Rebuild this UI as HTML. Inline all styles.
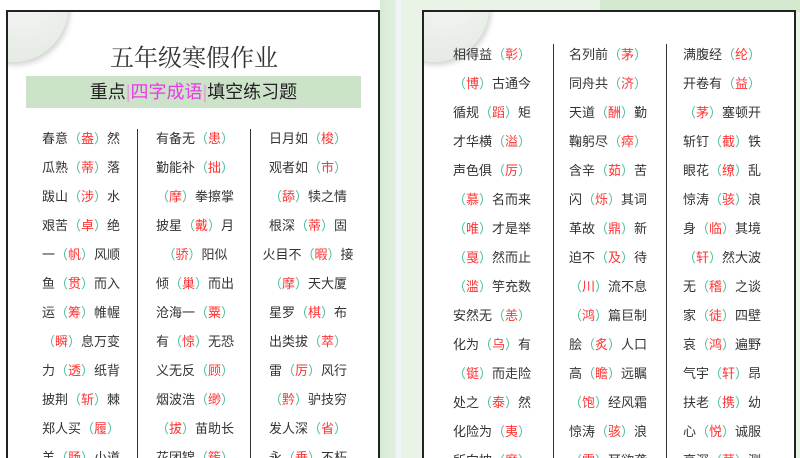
<!DOCTYPE html>
<html style="overflow:hidden;height:458px"><head><meta charset="utf-8"><style>
html,body{overflow:hidden}
body{margin:0;width:800px;height:458px;overflow:hidden;background:#e6f2e4;position:relative;font-family:"Liberation Sans","Noto Sans CJK SC",sans-serif}
.bg1{position:absolute;left:0;top:0;width:380px;height:458px;background:#fff}
.bg2{position:absolute;left:380px;top:0;width:16px;height:458px;background:linear-gradient(90deg,#d6ebd3,#e2f0df)}
.bg3{position:absolute;left:396px;top:0;width:5px;height:458px;background:#f2f4fa}
.bg4{position:absolute;left:401px;top:0;width:399px;height:458px;background:#e9f4e7}
.top{position:absolute;left:600px;top:0;width:200px;height:12px;background:#d4e9cf}
.page{position:absolute;top:10px;height:448px;background:#fff;border:2px solid #222;border-bottom:none;box-sizing:border-box;overflow:hidden}
.circ{position:absolute;border-radius:50%;background:radial-gradient(circle at 60% 40%,#f4f6f3,#e0e6df);box-shadow:2px 3px 6px rgba(0,0,0,.18)}
.title{position:absolute;left:0;width:372px;top:32px;text-align:center;font-size:24px;line-height:30px;color:#333;font-family:"Liberation Serif","Noto Serif CJK SC",serif}
.band{position:absolute;left:18px;top:64px;width:335px;height:32px;background:#cde3c9;text-align:center;font-size:18px;line-height:32px;color:#222}
.band i{font-style:normal;color:#e838e8}
.band b{font-weight:normal;color:#e0a0d0}
.col{position:absolute;text-align:center;font-size:13px;line-height:29px;color:#333;white-space:nowrap}
.col p{margin:0}
.col s{text-decoration:none;color:#4bbf9a}
.col u{text-decoration:none;color:#f33}
.vl{position:absolute;width:1px;background:#333;top:117px;height:340px}
</style></head><body>
<div class="bg1"></div><div class="bg2"></div><div class="bg3"></div><div class="bg4"></div><div class="top"></div>
<div class="page" style="left:6px;width:374px">
<div class="circ" style="left:-50px;top:-60px;width:110px;height:110px"></div>
<div class="title">五年级寒假作业</div>
<div class="band">重点<b>|</b><i>四字成语</i><b>|</b>填空练习题</div>
<div class="vl" style="left:129px"></div><div class="vl" style="left:242px"></div>
<div class="col" style="left:13px;width:120px;top:112px">
<p>春意<s>（</s><u>盎</u><s>）</s>然</p><p>瓜熟<s>（</s><u>蒂</u><s>）</s>落</p><p>跋山<s>（</s><u>涉</u><s>）</s>水</p><p>艰苦<s>（</s><u>卓</u><s>）</s>绝</p><p>一<s>（</s><u>帆</u><s>）</s>风顺</p><p>鱼<s>（</s><u>贯</u><s>）</s>而入</p><p>运<s>（</s><u>筹</u><s>）</s>帷幄</p><p><s>（</s><u>瞬</u><s>）</s>息万变</p><p>力<s>（</s><u>透</u><s>）</s>纸背</p><p>披荆<s>（</s><u>斩</u><s>）</s>棘</p><p>郑人买<s>（</s><u>履</u><s>）</s></p><p>羊<s>（</s><u>肠</u><s>）</s>小道</p></div>
<div class="col" style="left:127px;width:120px;top:112px">
<p>有备无<s>（</s><u>患</u><s>）</s></p><p>勤能补<s>（</s><u>拙</u><s>）</s></p><p><s>（</s><u>摩</u><s>）</s>拳擦掌</p><p>披星<s>（</s><u>戴</u><s>）</s>月</p><p><s>（</s><u>骄</u><s>）</s>阳似</p><p>倾<s>（</s><u>巢</u><s>）</s>而出</p><p>沧海一<s>（</s><u>粟</u><s>）</s></p><p>有<s>（</s><u>惊</u><s>）</s>无恐</p><p>义无反<s>（</s><u>顾</u><s>）</s></p><p>烟波浩<s>（</s><u>缈</u><s>）</s></p><p><s>（</s><u>拔</u><s>）</s>苗助长</p><p>花团锦<s>（</s><u>簇</u><s>）</s></p></div>
<div class="col" style="left:240px;width:120px;top:112px">
<p>日月如<s>（</s><u>梭</u><s>）</s></p><p>观者如<s>（</s><u>市</u><s>）</s></p><p><s>（</s><u>舔</u><s>）</s>犊之情</p><p>根深<s>（</s><u>蒂</u><s>）</s>固</p><p>火目不<s>（</s><u>暇</u><s>）</s>接</p><p><s>（</s><u>摩</u><s>）</s>天大厦</p><p>星罗<s>（</s><u>棋</u><s>）</s>布</p><p>出类拔<s>（</s><u>萃</u><s>）</s></p><p>雷<s>（</s><u>厉</u><s>）</s>风行</p><p><s>（</s><u>黔</u><s>）</s>驴技穷</p><p>发人深<s>（</s><u>省</u><s>）</s></p><p>永<s>（</s><u>垂</u><s>）</s>不朽</p></div>
</div>
<div class="page" style="left:422px;width:374px">
<div class="circ" style="left:-45px;top:-60px;width:110px;height:110px"></div>
<div class="vl" style="left:129px;top:32px;height:420px"></div><div class="vl" style="left:242px;top:32px;height:420px"></div>
<div class="col" style="left:8px;width:120px;top:28px">
<p>相得益<s>（</s><u>彰</u><s>）</s></p><p><s>（</s><u>博</u><s>）</s>古通今</p><p>循规<s>（</s><u>蹈</u><s>）</s>矩</p><p>才华横<s>（</s><u>溢</u><s>）</s></p><p>声色俱<s>（</s><u>厉</u><s>）</s></p><p><s>（</s><u>慕</u><s>）</s>名而来</p><p><s>（</s><u>唯</u><s>）</s>才是举</p><p><s>（</s><u>戛</u><s>）</s>然而止</p><p><s>（</s><u>滥</u><s>）</s>竽充数</p><p>安然无<s>（</s><u>恙</u><s>）</s></p><p>化为<s>（</s><u>乌</u><s>）</s>有</p><p><s>（</s><u>铤</u><s>）</s>而走险</p><p>处之<s>（</s><u>泰</u><s>）</s>然</p><p>化险为<s>（</s><u>夷</u><s>）</s></p><p>所向披<s>（</s><u>靡</u><s>）</s></p></div>
<div class="col" style="left:124px;width:120px;top:28px">
<p>名列前<s>（</s><u>茅</u><s>）</s></p><p>同舟共<s>（</s><u>济</u><s>）</s></p><p>天道<s>（</s><u>酬</u><s>）</s>勤</p><p>鞠躬尽<s>（</s><u>瘁</u><s>）</s></p><p>含辛<s>（</s><u>茹</u><s>）</s>苦</p><p>闪<s>（</s><u>烁</u><s>）</s>其词</p><p>革故<s>（</s><u>鼎</u><s>）</s>新</p><p>迫不<s>（</s><u>及</u><s>）</s>待</p><p><s>（</s><u>川</u><s>）</s>流不息</p><p><s>（</s><u>鸿</u><s>）</s>篇巨制</p><p>脍<s>（</s><u>炙</u><s>）</s>人口</p><p>高<s>（</s><u>瞻</u><s>）</s>远瞩</p><p><s>（</s><u>饱</u><s>）</s>经风霜</p><p>惊涛<s>（</s><u>骇</u><s>）</s>浪</p><p><s>（</s><u>震</u><s>）</s>耳欲聋</p></div>
<div class="col" style="left:238px;width:120px;top:28px">
<p>满腹经<s>（</s><u>纶</u><s>）</s></p><p>开卷有<s>（</s><u>益</u><s>）</s></p><p><s>（</s><u>茅</u><s>）</s>塞顿开</p><p>斩钉<s>（</s><u>截</u><s>）</s>铁</p><p>眼花<s>（</s><u>缭</u><s>）</s>乱</p><p>惊涛<s>（</s><u>骇</u><s>）</s>浪</p><p>身<s>（</s><u>临</u><s>）</s>其境</p><p><s>（</s><u>轩</u><s>）</s>然大波</p><p>无<s>（</s><u>稽</u><s>）</s>之谈</p><p>家<s>（</s><u>徒</u><s>）</s>四壁</p><p>哀<s>（</s><u>鸿</u><s>）</s>遍野</p><p>气宇<s>（</s><u>轩</u><s>）</s>昂</p><p>扶老<s>（</s><u>携</u><s>）</s>幼</p><p>心<s>（</s><u>悦</u><s>）</s>诚服</p><p>高深<s>（</s><u>莫</u><s>）</s>测</p></div>
</div>
</body></html>
